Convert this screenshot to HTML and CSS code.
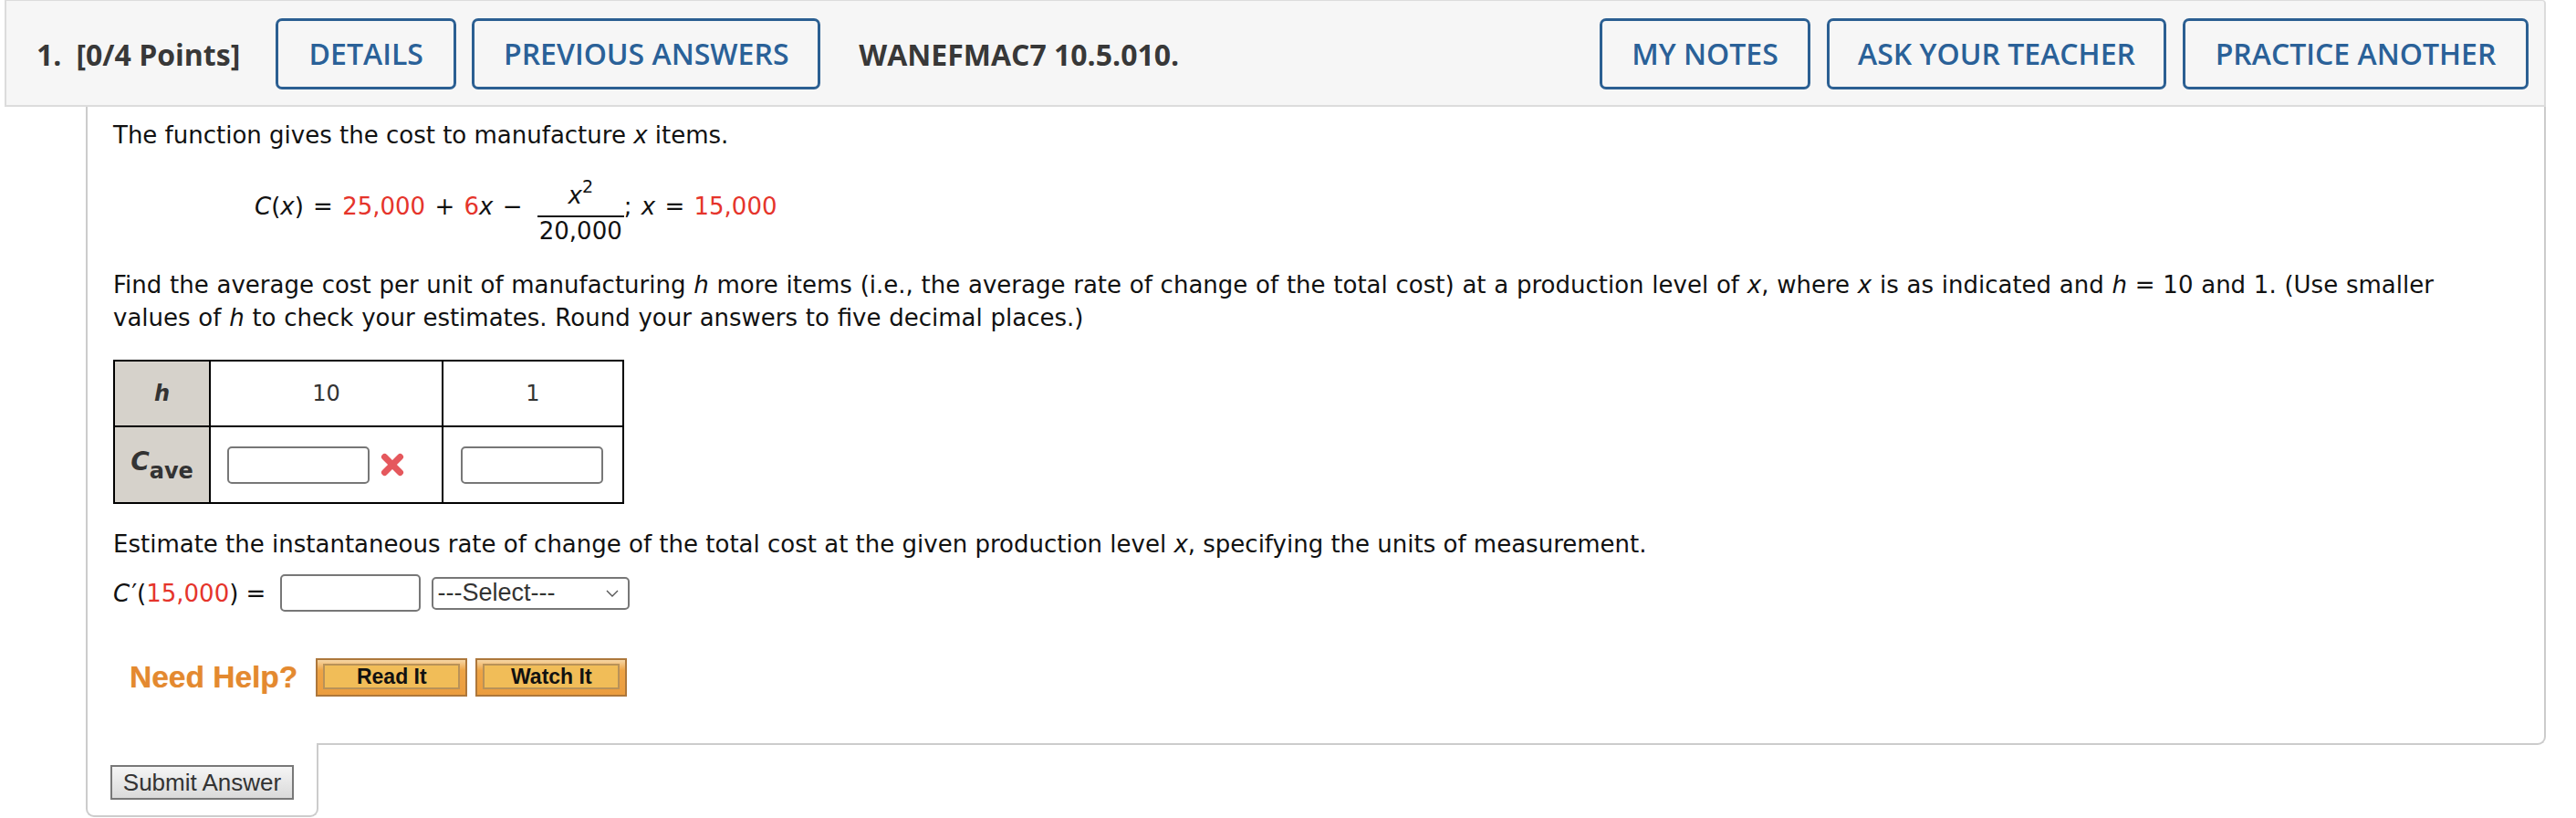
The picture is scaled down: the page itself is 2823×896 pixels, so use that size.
FILE: index.html
```html
<!DOCTYPE html>
<html lang="en">
<head>
<meta charset="utf-8">
<title>WANEFMAC7 10.5.010.</title>
<link rel="stylesheet" href="styles.css">
</head>
<body>
<div class="page">
  <header class="qhead">
    <div class="qnum"><span class="num">1.</span><span>[0/4 Points]</span></div>
    <button class="hbtn w-details">DETAILS</button>
    <button class="hbtn w-prev">PREVIOUS ANSWERS</button>
    <div class="qid">WANEFMAC7 10.5.010.</div>
    <button class="hbtn w-notes push">MY NOTES</button>
    <button class="hbtn w-ask">ASK YOUR TEACHER</button>
    <button class="hbtn w-practice">PRACTICE ANOTHER</button>
  </header>

  <section class="qbody">
    <p class="line">The function gives the cost to manufacture <i>x</i> items.</p>
    <div class="eq"><i>C</i>(<i>x</i>) = <span class="red">25,000</span> + <span class="red">6</span><i>x</i> − <span class="frac"><span class="numer"><i>x</i><sup>2</sup></span><span class="denom">20,000</span></span>; <i>x</i> = <span class="red">15,000</span></div>
    <p class="line task">Find the average cost per unit of manufacturing <i>h</i> more items (i.e., the average rate of change of the total cost) at a production level of <i>x</i>, where <i>x</i> is as indicated and <i>h</i> = 10 and 1. (Use smaller<br>values of <i>h</i> to check your estimates. Round your answers to five decimal places.)</p>

    <table class="grid">
      <colgroup><col class="c1"><col class="c2"><col class="c3"></colgroup>
      <tr class="r1">
        <th><i>h</i></th>
        <td class="mid">10</td>
        <td class="mid">1</td>
      </tr>
      <tr class="r2">
        <th><i class="cbig">C</i><sub>ave</sub></th>
        <td class="inp"><span class="field"></span><svg class="wrong" viewBox="0 0 26 26" width="26" height="26"><path d="M4.5 4.5 L21.5 21.5 M21.5 4.5 L4.5 21.5" stroke="#e5585d" stroke-width="7" stroke-linecap="round" fill="none"/></svg></td>
        <td class="inp c"><span class="field"></span></td>
      </tr>
    </table>

    <p class="line est">Estimate the instantaneous rate of change of the total cost at the given production level <i>x</i>, specifying the units of measurement.</p>
    <div class="ans-row">
      <span class="lbl"><i>C</i><span class="prime">′</span>(<span class="red">15,000</span>) =</span>
      <span class="field wide"></span>
      <span class="select">---Select---<svg viewBox="0 0 14 8" width="14" height="8"><path d="M1 1 L7 7 L13 1" stroke="#555" stroke-width="1.4" fill="none"/></svg></span>
    </div>

    <div class="help">
      <span class="need">Need Help?</span>
      <span class="hb"><span class="hb-in">Read It</span></span>
      <span class="hb"><span class="hb-in">Watch It</span></span>
    </div>
  </section>
  <div class="submit-tab"><button class="submit">Submit Answer</button></div>
</div>
</body>
</html>
```

FILE: styles.css
```css
html, body { margin: 0; padding: 0; background: #fff; }
.page { padding: 0 33px 0 5px; }

.qhead {
  display: flex;
  align-items: center;
  gap: 17px;
  background: #f6f6f6;
  border: 2px solid #dcdcdc;
  border-top-width: 1px;
  border-radius: 0 4px 0 0;
  padding: 19px 17px 17px 33px;
  font-family: "Open Sans", sans-serif;
}
.qnum { font-size: 32px; font-weight: 700; color: #383838; margin-right: 22px; white-space: nowrap; }
.qnum .num { margin-right: 16px; }
.qid { font-size: 32px; font-weight: 700; color: #383838; margin-left: 25px; white-space: nowrap; }
.hbtn {
  font-family: "Open Sans", sans-serif;
  font-size: 32px;
  font-weight: 600;
  color: #2a6198;
  background: #f6f6f6;
  border: 3px solid #2b5f92;
  border-radius: 7px;
  height: 78px;
  padding: 0;
  white-space: nowrap;
  line-height: 1;
  text-align: center;
  flex: none;
}
.w-details { width: 198px; }
.w-prev { width: 382px; }
.w-notes { width: 231px; }
.w-ask { width: 372px; margin-left: 1px; }
.w-practice { width: 379px; margin-left: 1px; }
.push { margin-left: auto; }

.qbody {
  margin-left: 89px;
  border: 2px solid #cccccc;
  border-top: 0;
  border-bottom-right-radius: 9px;
  padding: 13px 28px 51px 28px;
  font-family: "DejaVu Sans", Verdana, sans-serif;
  font-size: 26px;
  color: #111;
}
.line { margin: 0; line-height: 36px; }
.red { color: #e5342b; }
i { font-style: italic; }

.eq { margin-top: 33px; line-height: 36px; padding-left: 155px; white-space: nowrap; word-spacing: 2px; }
.frac { display: inline-block; vertical-align: -27px; text-align: center; margin: 0 0 0 6px; word-spacing: 0; }
.numer { display: block; line-height: 30px; padding-bottom: 7px; border-bottom: 2px solid #111; }
.numer sup { font-size: 19px; line-height: 0; vertical-align: 12px; }
.denom { display: block; line-height: 30px; padding: 0 2px; }

.task { margin-top: 26px; word-spacing: 0.5px; }

.grid {
  margin-top: 28px;
  border-collapse: collapse;
  border: 2px solid #000;
  font-size: 24px;
  color: #333;
  table-layout: fixed;
  width: 558px;
}
.c1 { width: 105px; }
.c2 { width: 255px; }
.c3 { width: 198px; }
.grid th, .grid td { border: 2px solid #000; padding: 0; }
.grid th { background: #d6d2cb; font-weight: 700; color: #333; }
.r1 { height: 72px; }
.r2 { height: 84px; }
.cbig { font-size: 28px; }
.grid th sub { font-size: 24px; vertical-align: -9px; }
.mid { text-align: center; }
.inp { padding-left: 18px !important; }
.inp.c { padding-left: 19px !important; }
.field {
  display: inline-block;
  box-sizing: border-box;
  width: 156px;
  height: 41px;
  border: 2px solid #777;
  border-radius: 5px;
  background: #fff;
  vertical-align: middle;
}
.wrong { vertical-align: middle; margin-left: 12px; }

.est { margin-top: 26px; }
.ans-row { margin-top: 15px; display: flex; align-items: center; height: 41px; }
.lbl { line-height: 36px; margin-right: 16px; white-space: nowrap; }
.prime { margin-left: 2px; }
.field.wide { width: 154px; }
.select {
  box-sizing: border-box;
  margin-left: 12px;
  width: 217px;
  height: 36px;
  border: 2px solid #777;
  border-radius: 5px;
  display: flex;
  align-items: center;
  justify-content: space-between;
  padding: 0 10px 0 4px;
  font-family: "Liberation Sans", Arial, sans-serif;
  font-size: 27px;
  color: #333;
}

.help { margin-top: 51px; display: flex; align-items: center; padding-left: 18px; height: 42px; }
.need {
  font-family: "Liberation Sans", Arial, sans-serif;
  font-weight: 700;
  font-size: 33.5px;
  color: #e4892f;
  text-shadow: 0 0 1px rgba(228, 137, 47, 0.6);
  margin-right: 20px;
}
.hb {
  box-sizing: border-box;
  width: 166px;
  height: 42px;
  border: 2px solid #ad773b;
  background: linear-gradient(#f6d6a4 0, #eea445 30%, #eb9d3f 100%);
  padding: 4px 6px 6px 6px;
  margin-right: 9px;
  display: flex;
}
.hb-in {
  flex: 1;
  border: 2px solid #b99258;
  background: #f1bd58;
  display: flex;
  align-items: center;
  justify-content: center;
  font-family: "Liberation Sans", Arial, sans-serif;
  font-weight: 700;
  font-size: 23px;
  color: #111;
}

.submit-tab {
  box-sizing: border-box;
  width: 255px;
  margin: -2px 0 0 89px;
  background: #fff;
  border: 2px solid #cccccc;
  border-top: 0;
  border-radius: 0 0 9px 9px;
  padding: 24px 25px 17px 25px;
}
.submit {
  display: block;
  box-sizing: border-box;
  width: 201px;
  height: 38px;
  border: 2px solid #787878;
  background: linear-gradient(#f5f5f5, #dadada);
  font-family: "Liberation Sans", Arial, sans-serif;
  font-size: 26px;
  color: #333;
  padding: 0;
}
```
